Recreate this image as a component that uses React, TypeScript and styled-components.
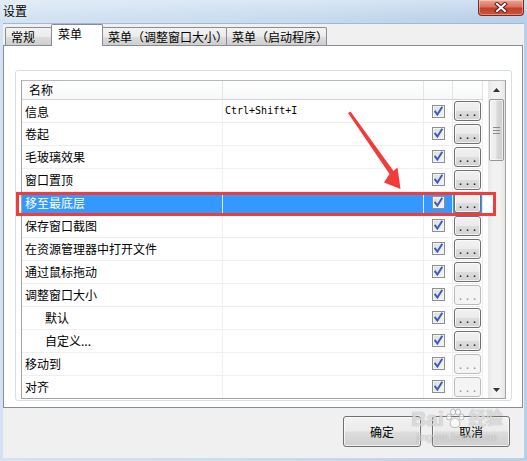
import React from 'react';
import styled, { createGlobalStyle } from 'styled-components';

const GlobalStyle = createGlobalStyle`
  html, body { margin: 0; padding: 0; background: #ffffff; }
  body { font-family: "Noto Sans CJK SC", "Liberation Sans", sans-serif; }
  * { box-sizing: border-box; }
`;

const CJK = `"Noto Sans CJK SC", "Liberation Sans", sans-serif`;

const Window = styled.div`
  position: relative;
  width: 527px;
  height: 461px;
  display: flex;
  flex-direction: column;
  background: linear-gradient(to right, #d4e3f3 0%, #c8dbef 55%, #b8cfe9 100%);
  overflow: hidden;
  font-family: ${CJK};
`;

const TitleBar = styled.div`
  height: 23px;
  display: flex;
  align-items: flex-start;
  padding-left: 3px;
  background: linear-gradient(to bottom, rgba(255,255,255,0.35), rgba(255,255,255,0) 80%);
`;

const Title = styled.div`
  margin-top: 3px;
  font-size: 12px;
  line-height: 15px;
  color: #000;
  text-shadow: 0 0 6px rgba(255,255,255,0.9);
`;

const CloseButton = styled.div`
  margin-left: auto;
  margin-right: 3px;
  width: 46px;
  height: 16px;
  border: 1px solid #7a2a20;
  border-top: none;
  border-radius: 0 0 4px 4px;
  background: linear-gradient(to bottom, #e8a597 0%, #d9725f 45%, #c4402a 55%, #cc5538 100%);
  box-shadow: inset 0 0 0 1px rgba(255,255,255,0.35);
  display: flex;
  align-items: center;
  justify-content: center;
`;

const Client = styled.div`
  flex: 1;
  margin: 0 3px 3px 3px;
  background: #f0f0f0;
  border-top: 1px solid #a9b8c9;
  display: flex;
  flex-direction: column;
`;

const TabStrip = styled.div`
  height: 21px;
  display: flex;
  align-items: flex-end;
  padding-left: 2px;
  position: relative;
  z-index: 2;
`;

const Tab = styled.div<{ $w: number; $active?: boolean }>`
  width: ${p => p.$w}px;
  height: ${p => (p.$active ? 22 : 18)}px;
  margin-bottom: ${p => (p.$active ? -1 : 0)}px;
  margin-left: -1px;
  &:first-child { margin-left: 0; }
  border: 1px solid #898c95;
  border-bottom: none;
  border-radius: 2px 2px 0 0;
  background: ${p => (p.$active ? '#ffffff' : 'linear-gradient(to bottom, #f3f3f3 0%, #ebebeb 50%, #dddddd 51%, #cfcfcf 100%)')};
  padding-left: ${p => (p.$active ? 6 : 5)}px;
  font-size: 12px;
  line-height: ${p => (p.$active ? 18 : 17)}px;
  color: #000;
  white-space: nowrap;
  position: relative;
  z-index: ${p => (p.$active ? 2 : 1)};
`;

const Panel = styled.div`
  height: 363px;
  margin-right: 1px;
  border: 1px solid #898c95;
  background: #ffffff;
  display: flex;
  flex-direction: column;
  position: relative;
  z-index: 1;
`;

const GroupBox = styled.div`
  margin: 24px 0 0 11px;
  width: 497px;
  height: 331px;
  border: 1px solid #d5dfe5;
  border-radius: 3px;
  padding: 9px 0 0 5px;
`;

const ListBox = styled.div`
  width: 485px;
  height: 319px;
  border: 1px solid #a3a3a3;
  border-top-color: #b8b8b8;
  background: #fff;
  display: flex;
  overflow: hidden;
`;

const Table = styled.div`
  width: 461px;
  display: flex;
  flex-direction: column;
`;

const Spacer = styled.div`
  width: 5px;
`;

const COLS = '201px 201px 29px 30px';

const HeaderRow = styled.div`
  display: grid;
  grid-template-columns: ${COLS};
  height: 19px;
  flex-shrink: 0;
  border-bottom: 1px solid #d5d5d5;
  background: linear-gradient(to bottom, #ffffff 0%, #f7f8f9 100%);
`;

const HeaderCell = styled.div`
  border-right: 1px solid #e3e4e6;
  padding-left: 7px;
  font-size: 12px;
  line-height: 18px;
  color: #000;
`;

const Row = styled.div<{ $selected?: boolean }>`
  display: grid;
  grid-template-columns: ${COLS};
  height: 23px;
  flex-shrink: 0;
  border-bottom: 1px solid #efefef;
  background: ${p => (p.$selected ? '#3399ff' : '#ffffff')};
  color: ${p => (p.$selected ? '#ffffff' : '#000000')};
`;

const Cell = styled.div<{ $selected?: boolean }>`
  border-right: 1px solid ${p => (p.$selected ? '#d8e9fb' : '#efefef')};
  display: flex;
  align-items: center;
  justify-content: center;
`;

const NameCell = styled(Cell)<{ $indent?: boolean }>`
  justify-content: flex-start;
  padding-left: ${p => (p.$indent ? 23 : 3)}px;
  font-size: 12px;
  line-height: 22px;
  white-space: nowrap;
`;

const KeyCell = styled(Cell)`
  justify-content: flex-start;
  padding-left: 2px;
  font-family: "DejaVu Sans Mono", "Liberation Mono", monospace;
  font-size: 10px;
  line-height: 22px;
  padding-bottom: 1px;
`;

const CheckBox = styled.div`
  width: 13px;
  height: 13px;
  border: 1px solid #8e8f8f;
  background: linear-gradient(135deg, #dcdcdc 0%, #f6f6f6 100%);
  box-shadow: inset 0 0 0 1px #f4f4f4;
  display: flex;
  align-items: center;
  justify-content: center;
  margin-top: -1px;
`;

const DotsButton = styled.div<{ $disabled?: boolean }>`
  width: 27px;
  height: 20px;
  margin-top: -1px;
  border: 1px solid ${p => (p.$disabled ? '#b9bdc0' : '#707070')};
  border-radius: 3px;
  background: ${p => (p.$disabled ? '#f4f4f4' : 'linear-gradient(to bottom, #f2f2f2 0%, #ebebeb 48%, #dddddd 52%, #d2d2d2 100%)')};
  box-shadow: ${p => (p.$disabled ? 'none' : 'inset 0 0 0 1px rgba(255,255,255,0.7)')};
  color: ${p => (p.$disabled ? '#8d8d8d' : '#000')};
  font-family: "DejaVu Sans Mono", "Liberation Mono", monospace;
  font-size: 10px;
  letter-spacing: 1px;
  line-height: 20px;
  padding-top: 1px;
  padding-left: 1px;
  text-align: center;
`;

const ScrollBar = styled.div`
  width: 17px;
  display: flex;
  flex-direction: column;
  background: linear-gradient(to right, #e6e6e6 0%, #f2f2f2 30%, #f2f2f2 70%, #e6e6e6 100%);
`;

const ArrowBox = styled.div`
  height: 17px;
  display: flex;
  align-items: center;
  justify-content: center;
  flex-shrink: 0;
`;

const Track = styled.div`
  flex: 1;
  padding: 1px 1px 0 1px;
`;

const Thumb = styled.div`
  height: 62px;
  border: 1px solid #979797;
  border-radius: 2px;
  background: linear-gradient(to right, #f2f2f2 0%, #ebebeb 45%, #d8d8d8 55%, #cfcfcf 100%);
  box-shadow: inset 0 0 0 1px rgba(255,255,255,0.6);
  display: flex;
  align-items: center;
  justify-content: center;
`;

const ButtonBar = styled.div`
  display: flex;
  justify-content: flex-end;
  gap: 11px;
  padding: 8px 14px 0 0;
`;

const DialogButton = styled.div`
  width: 78px;
  height: 31px;
  border: 1px solid #707070;
  border-radius: 3px;
  background: linear-gradient(to bottom, #f2f2f2 0%, #ebebeb 48%, #dddddd 52%, #cfcfcf 100%);
  box-shadow: inset 0 0 0 1px rgba(255,255,255,0.7);
  display: flex;
  align-items: center;
  justify-content: center;
  font-size: 12px;
  color: #000;
`;

const Highlight = styled.div`
  position: absolute;
  z-index: 10;
  left: 16px;
  top: 192px;
  width: 480px;
  height: 24px;
  border: 3px solid #f23b3b;
  background: linear-gradient(to right, transparent 0, transparent 464px, #ffffff 464px);
  pointer-events: none;
`;

const ArrowSvg = styled.svg`
  position: absolute;
  z-index: 10;
  left: 340px;
  top: 105px;
  width: 70px;
  height: 90px;
  pointer-events: none;
`;

const Watermark = styled.div`
  position: absolute;
  z-index: 10;
  left: 404px;
  top: 406px;
  width: 106px;
  display: flex;
  flex-direction: column;
  align-items: center;
  pointer-events: none;
  color: rgba(255, 255, 255, 0.6);
  text-shadow: 0 0 1px rgba(130,130,130,0.45), 0 0 1px rgba(130,130,130,0.45);
  font-family: "Liberation Sans", ${CJK};
`;

const WatermarkMain = styled.div`
  display: flex;
  align-items: center;
  gap: 1px;
  font-size: 21px;
  font-weight: bold;
  line-height: 26px;
  white-space: nowrap;
`;

const WatermarkCJK = styled.span`
  font-size: 17px;
  margin-left: 3px;
`;

const WatermarkSub = styled.div`
  font-size: 10px;
  line-height: 12px;
  white-space: nowrap;
`;

type RowData = {
  name: string;
  key?: string;
  selected?: boolean;
  disabled?: boolean;
  indent?: boolean;
};

const rows: RowData[] = [
  { name: '信息', key: 'Ctrl+Shift+I' },
  { name: '卷起' },
  { name: '毛玻璃效果' },
  { name: '窗口置顶' },
  { name: '移至最底层', selected: true },
  { name: '保存窗口截图' },
  { name: '在资源管理器中打开文件' },
  { name: '通过鼠标拖动' },
  { name: '调整窗口大小', disabled: true },
  { name: '默认', indent: true },
  { name: '自定义...', indent: true },
  { name: '移动到', disabled: true },
  { name: '对齐', disabled: true },
];

const Check = () => (
  <svg width="11" height="11" viewBox="0 0 11 11">
    <path d="M2.2 5.6 L4.4 8.6 L8.8 1.6" fill="none" stroke="#3a5cb8" strokeWidth="1.9" strokeLinecap="square" />
  </svg>
);

const CloseGlyph = () => (
  <svg width="14" height="11" viewBox="0 0 14 11">
    <path d="M3 2 L11 9 M11 2 L3 9" stroke="#5a1c14" strokeWidth="4" strokeLinecap="square" />
    <path d="M3 2 L11 9 M11 2 L3 9" stroke="#ffffff" strokeWidth="2" strokeLinecap="square" />
  </svg>
);

const UpGlyph = () => (
  <svg width="7" height="4" viewBox="0 0 7 4">
    <path d="M0 4 L3.5 0 L7 4 Z" fill="#333" />
  </svg>
);

const DownGlyph = () => (
  <svg width="7" height="4" viewBox="0 0 7 4">
    <path d="M0 0 L7 0 L3.5 4 Z" fill="#333" />
  </svg>
);

const Grip = () => (
  <svg width="7" height="7" viewBox="0 0 7 7">
    <path d="M0 0.5 H7 M0 3.5 H7 M0 6.5 H7" stroke="#8a8a8a" strokeWidth="1" />
  </svg>
);

const Paw = () => (
  <svg width="20" height="22" viewBox="0 0 20 22">
    <g fill="rgba(255,255,255,0.6)" stroke="rgba(130,130,130,0.5)" strokeWidth="1">
      <ellipse cx="4" cy="9" rx="2.5" ry="3" />
      <ellipse cx="8" cy="4" rx="2.5" ry="3" />
      <ellipse cx="13" cy="4" rx="2.5" ry="3" />
      <ellipse cx="16.5" cy="9" rx="2.5" ry="3" />
      <path d="M10 10 C6 10 4 16 6 18 C8 20 12 20 14 18 C16 16 14 10 10 10 Z" />
    </g>
  </svg>
);

export default function App() {
  return (
    <>
      <GlobalStyle />
      <Window>
        <TitleBar>
          <Title>设置</Title>
          <CloseButton>
            <CloseGlyph />
          </CloseButton>
        </TitleBar>
        <Client>
          <TabStrip>
            <Tab $w={47}>常规</Tab>
            <Tab $w={52} $active>菜单</Tab>
            <Tab $w={125}>菜单（调整窗口大小）</Tab>
            <Tab $w={101}>菜单（启动程序）</Tab>
          </TabStrip>
          <Panel>
            <GroupBox>
              <ListBox>
                <Table>
                  <HeaderRow>
                    <HeaderCell>名称</HeaderCell>
                    <HeaderCell />
                    <HeaderCell />
                    <HeaderCell />
                  </HeaderRow>
                  {rows.map(r => (
                    <Row key={r.name} $selected={r.selected}>
                      <NameCell $selected={r.selected} $indent={r.indent}>{r.name}</NameCell>
                      <KeyCell $selected={r.selected}>{r.key ?? ''}</KeyCell>
                      <Cell $selected={r.selected}>
                        <CheckBox>
                          <Check />
                        </CheckBox>
                      </Cell>
                      <Cell $selected={r.selected}>
                        <DotsButton $disabled={r.disabled}>...</DotsButton>
                      </Cell>
                    </Row>
                  ))}
                </Table>
                <Spacer />
                <ScrollBar>
                  <ArrowBox>
                    <UpGlyph />
                  </ArrowBox>
                  <Track>
                    <Thumb>
                      <Grip />
                    </Thumb>
                  </Track>
                  <ArrowBox>
                    <DownGlyph />
                  </ArrowBox>
                </ScrollBar>
              </ListBox>
            </GroupBox>
          </Panel>
          <ButtonBar>
            <DialogButton>确定</DialogButton>
            <DialogButton>取消</DialogButton>
          </ButtonBar>
        </Client>
        <Highlight />
        <ArrowSvg viewBox="340 105 70 90">
          <polygon
            points="348,113 350.5,111.5 393.5,171 397.5,167.5 400.5,189 384,182.5 389.5,174"
            fill="#f23b3b"
          />
        </ArrowSvg>
        <Watermark>
          <WatermarkMain>
            Bai
            <Paw />
            <WatermarkCJK>经验</WatermarkCJK>
          </WatermarkMain>
          <WatermarkSub>jingyan.baidu.com</WatermarkSub>
        </Watermark>
      </Window>
    </>
  );
}
